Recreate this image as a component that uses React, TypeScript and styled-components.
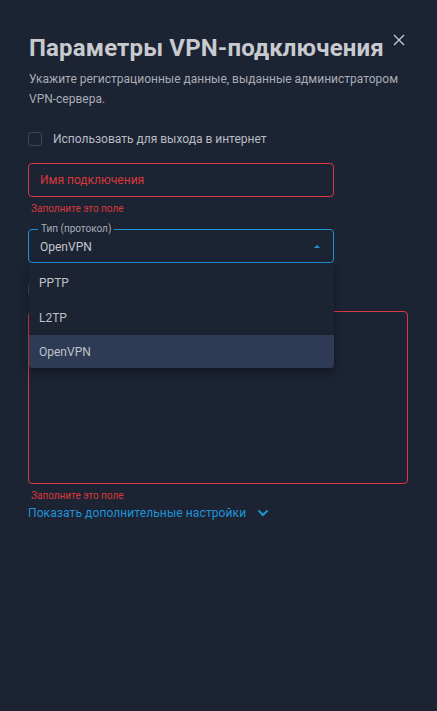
import React, { useState } from 'react';
import styled, { createGlobalStyle } from 'styled-components';

const GlobalStyle = createGlobalStyle`
    html, body {
        margin: 0;
        padding: 0;
        background: #1c2333;
    }
    body {
        font-family: Roboto, "Noto Sans", sans-serif;
    }
`;

const protocols = ['PPTP', 'L2TP', 'OpenVPN'];

export default function App() {
    const [protocol, setProtocol] = useState('OpenVPN');
    const [open, setOpen] = useState(true);

    return (
        <>
            <GlobalStyle />
            <Dialog>
                <Header>
                    <Title>Параметры VPN-подключения</Title>
                    <CloseButton aria-label="Закрыть">
                        <svg width="12" height="12" viewBox="0 0 12 12">
                            <path d="M1 1L11 11M11 1L1 11" stroke="#c3c6cc" strokeWidth="1.4" />
                        </svg>
                    </CloseButton>
                </Header>
                <Subtitle>
                    Укажите регистрационные данные, выданные администратором VPN-сервера.
                </Subtitle>

                <CheckRow>
                    <CheckBox />
                    <CheckLabel>Использовать для выхода в интернет</CheckLabel>
                </CheckRow>

                <Field>
                    <TextInput $error placeholder="Имя подключения" />
                    <ErrorText>Заполните это поле</ErrorText>
                </Field>

                <SelectWrap>
                    <SelectBox $active={open} onClick={() => setOpen(!open)}>
                        <Legend>Тип (протокол)</Legend>
                        <SelectValue>{protocol}</SelectValue>
                        <Caret />
                    </SelectBox>
                    {open && (
                        <Menu>
                            {protocols.map((p) => (
                                <MenuItem
                                    key={p}
                                    $selected={p === protocol}
                                    onClick={() => setProtocol(p)}
                                >
                                    {p}
                                </MenuItem>
                            ))}
                        </Menu>
                    )}
                </SelectWrap>

                {/* covered by the open menu, only its left edge shows */}
                <CheckRow $tight aria-label="Использовать сертификат">
                    <CheckBox />
                </CheckRow>

                <Field $gap={15}>
                    <TextArea $error />
                    <ErrorText>Заполните это поле</ErrorText>
                </Field>

                <MoreLink>
                    Показать дополнительные настройки
                    <svg width="12" height="8" viewBox="0 0 12 8">
                        <path d="M1.5 1.5L6 6L10.5 1.5" stroke="#1e93d8" strokeWidth="2" fill="none" />
                    </svg>
                </MoreLink>
            </Dialog>
        </>
    );
}

const Dialog = styled.div`
    min-height: 711px;
    box-sizing: border-box;
    padding: 31px 29px 0 28px;
    background: #1c2333;
`;

const Header = styled.div`
    display: flex;
    align-items: flex-start;
    gap: 9px;
    margin-left: 1px;
`;

const Title = styled.h1`
    margin: 0;
    font-size: 24px;
    line-height: 34px;
    font-weight: 700;
    color: #c8cacf;
    letter-spacing: 0.15px;
`;

const CloseButton = styled.button`
    display: flex;
    margin-top: 3px;
    padding: 0;
    background: none;
    border: none;
    cursor: pointer;
`;

const Subtitle = styled.p`
    margin: 4px 0 0 1px;
    width: 380px;
    font-size: 12px;
    line-height: 20px;
    color: #a9adb6;
`;

const CheckRow = styled.label<{ $tight?: boolean }>`
    display: flex;
    align-items: center;
    gap: 11px;
    margin-top: ${(p) => (p.$tight ? '19px' : '23px')};
    height: 14px;
`;

const CheckBox = styled.span`
    width: 14px;
    height: 14px;
    box-sizing: border-box;
    border: 1px solid #3a4764;
    border-radius: 3px;
    flex-shrink: 0;
`;

const CheckLabel = styled.span`
    font-size: 12px;
    color: #b9bcc3;
`;

const Field = styled.div<{ $gap?: number }>`
    display: flex;
    flex-direction: column;
    margin-top: ${(p) => p.$gap ?? 17}px;
`;

const TextInput = styled.input<{ $error?: boolean }>`
    width: 306px;
    height: 34px;
    box-sizing: border-box;
    padding: 0 11px;
    background: transparent;
    border: 1px solid ${(p) => (p.$error ? '#d9393c' : '#3a4764')};
    border-radius: 4px;
    font-family: Roboto, sans-serif;
    font-size: 12px;
    outline: none;

    &::placeholder {
        color: #d9393c;
    }
`;

const TextArea = styled.div<{ $error?: boolean }>`
    width: 380px;
    height: 173px;
    box-sizing: border-box;
    border: 1px solid ${(p) => (p.$error ? '#d9393c' : '#3a4764')};
    border-radius: 4px;
`;

const ErrorText = styled.span`
    margin: 5px 0 0 3px;
    font-size: 10px;
    line-height: 13px;
    color: #d9393c;
`;

const SelectWrap = styled.div`
    position: relative;
    margin-top: 14px;
    width: 306px;
`;

const SelectBox = styled.div<{ $active?: boolean }>`
    position: relative;
    height: 34px;
    box-sizing: border-box;
    padding: 0 11px;
    display: flex;
    align-items: center;
    border: 1px solid ${(p) => (p.$active ? '#1e93d8' : '#3a4764')};
    border-radius: 4px;
    cursor: pointer;
`;

const Legend = styled.span`
    position: absolute;
    top: -7px;
    left: 9px;
    padding: 0 3px;
    background: #1c2333;
    font-size: 10px;
    line-height: 12px;
    color: #a9adb6;
`;

const SelectValue = styled.span`
    flex: 1;
    font-size: 12px;
    color: #c3c6cc;
    margin-top: 1px;
`;

const Caret = styled.span`
    width: 0;
    height: 0;
    margin-right: 2px;
    border-left: 3px solid transparent;
    border-right: 3px solid transparent;
    border-bottom: 3px solid #1e93d8;
`;

const Menu = styled.ul`
    position: absolute;
    top: 34px;
    left: 1px;
    right: 0;
    margin: 0;
    padding: 2px 0 0;
    list-style: none;
    background: #1c2333;
    border-radius: 0 0 3px 3px;
    box-shadow: 0 4px 10px rgba(0, 0, 0, 0.35);
    overflow: hidden;
    z-index: 2;
`;

const MenuItem = styled.li<{ $selected?: boolean }>`
    height: 35px;
    display: flex;
    align-items: center;
    padding: 0 10px;
    font-size: 12px;
    color: #bfc2c9;
    background: ${(p) => (p.$selected ? '#2e3b55' : 'transparent')};
    cursor: pointer;

    &:last-child {
        height: 33px;
    }
`;

const MoreLink = styled.a`
    display: inline-flex;
    align-items: center;
    gap: 11px;
    margin-top: 1px;
    font-size: 12px;
    line-height: 18px;
    letter-spacing: 0.1px;
    color: #1e93d8;
    cursor: pointer;
`;
